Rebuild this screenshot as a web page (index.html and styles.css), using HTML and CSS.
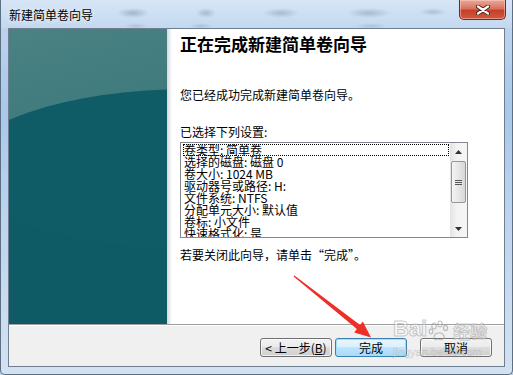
FILE: index.html
```html
<!DOCTYPE html>
<html lang="zh-CN">
<head>
    <meta charset="UTF-8">
    <title>新建简单卷向导</title>
    <link rel="stylesheet" href="styles.css">
</head>
<body>
    <div class="window">
        <div class="titlebar">
            <span class="title">新建简单卷向导</span>
            <button class="close">
                <svg width="14" height="10" viewBox="0 0 14 10">
                    <path d="M2 1.5 L12 8.5 M12 1.5 L2 8.5" stroke="#4a1d14" stroke-width="4" stroke-linecap="round"/>
                    <path d="M2 1.5 L12 8.5 M12 1.5 L2 8.5" stroke="#fff" stroke-width="2.2" stroke-linecap="round"/>
                </svg>
            </button>
        </div>

        <div class="client">
            <div class="main">
                <div class="side"></div>
                <div class="content">
                    <h1>正在完成新建简单卷向导</h1>
                    <p class="intro">您已经成功完成新建简单卷向导。</p>
                    <p class="label">已选择下列设置:</p>

                    <!-- settings summary -->
                    <div class="listbox">
                        <ul class="items">
                            <li class="focused">卷类型: 简单卷</li>
                            <li>选择的磁盘: 磁盘 0</li>
                            <li>卷大小: 1024 MB</li>
                            <li>驱动器号或路径: H:</li>
                            <li>文件系统: NTFS</li>
                            <li>分配单元大小: 默认值</li>
                            <li>卷标: 小文件</li>
                            <li>快速格式化: 是</li>
                        </ul>
                        <div class="scrollbar">
                            <div class="sb-arrow">
                                <svg width="7" height="4" viewBox="0 0 7 4"><path d="M0 4 L3.5 0 L7 4 Z" fill="#333"/></svg>
                            </div>
                            <div class="sb-track">
                                <div class="sb-thumb">
                                    <svg width="7" height="7" viewBox="0 0 7 7">
                                        <path d="M0 1.5 H7 M0 3.5 H7 M0 5.5 H7" stroke="#555" stroke-width="1"/>
                                    </svg>
                                </div>
                            </div>
                            <div class="sb-arrow">
                                <svg width="7" height="4" viewBox="0 0 7 4"><path d="M0 0 L3.5 4 L7 0 Z" fill="#333"/></svg>
                            </div>
                        </div>
                    </div>

                    <p class="hint">若要关闭此向导，请单击“完成”。</p>
                </div>
            </div>

            <div class="footer">
                <button class="btn">&lt; 上一步(<u>B</u>)</button>
                <button class="btn default">完成</button>
                <button class="btn cancel">取消</button>
            </div>
        </div>

        <!-- annotation overlay -->
        <svg class="arrow" width="513" height="375" viewBox="0 0 513 375">
            <polygon points="292.6,276.5 355.9,329.1 353.2,332.6 370,337.5 361.8,321.6 359.1,325.1 293.4,275.5" fill="#ee2f28"/>
        </svg>

        <div class="watermark">
            <div class="wm-logo">
                <span>Bai</span>
                <svg width="22" height="22" viewBox="0 0 22 22">
                    <g fill="none" stroke="rgba(150,150,150,0.55)" stroke-width="1.2">
                        <ellipse cx="6" cy="6" rx="2.2" ry="3"/>
                        <ellipse cx="12" cy="4" rx="2.2" ry="3"/>
                        <ellipse cx="17.5" cy="8" rx="2" ry="2.6"/>
                        <ellipse cx="3" cy="11.5" rx="1.8" ry="2.4"/>
                        <path d="M6 18 C6 12 14 11 16 16 C17 20 12 20 10 19 C8 20 6 20 6 18 Z"/>
                    </g>
                </svg>
                <span class="wm-cn">经验</span>
            </div>
            <div class="wm-url">jingyan.baidu.com</div>
        </div>
    </div>
</body>
</html>
```

FILE: styles.css
```css
* {
    box-sizing: border-box;
    margin: 0;
    padding: 0;
}

body {
    width: 513px;
    height: 375px;
    overflow: hidden;
    font-family: "Noto Sans CJK SC", "Noto Sans", sans-serif;
    font-size: 12px;
    color: #000;
    background: #b9cfe7;
}

.window {
    position: relative;
    width: 513px;
    height: 375px;
    padding: 0 7px 7px 7px;
    display: flex;
    flex-direction: column;
    border: 1px solid #5d6f82;
    border-top: none;
    border-radius: 0 0 5px 5px;
    background:
        linear-gradient(to bottom, #cfe0f2 0, #bcd3ec 30px, #a9c8ea 110px, #bdd4ee 220px, #d3e2f2 375px);
}

/* title bar (aero glass) */
.titlebar {
    height: 28px;
    margin: 0 -7px;
    padding: 0 7px 0 7px;
    display: flex;
    justify-content: space-between;
    align-items: flex-start;
    background:
        radial-gradient(ellipse 16px 5px at 132px 13px, rgba(80, 100, 125, 0.35), transparent),
        radial-gradient(ellipse 10px 5px at 205px 13px, rgba(80, 100, 125, 0.3), transparent),
        radial-gradient(ellipse 18px 5px at 280px 13px, rgba(80, 100, 125, 0.3), transparent),
        radial-gradient(ellipse 22px 5px at 368px 13px, rgba(80, 100, 125, 0.3), transparent),
        radial-gradient(ellipse 14px 4px at 432px 12px, rgba(80, 100, 125, 0.25), transparent),
        radial-gradient(ellipse 12px 3px at 135px 26px, rgba(80, 100, 125, 0.2), transparent),
        radial-gradient(ellipse 12px 3px at 200px 26px, rgba(80, 100, 125, 0.2), transparent),
        radial-gradient(ellipse 16px 3px at 370px 26px, rgba(80, 100, 125, 0.2), transparent),
        linear-gradient(to bottom, #d6e6f6, #c3d8ef);
}

.title {
    line-height: 14px;
    padding-top: 8px;
    padding-left: 1px;
    text-shadow: 0 0 6px rgba(255, 255, 255, 0.9);
}

.close {
    width: 47px;
    height: 20px;
    margin-right: -1px;
    border: 1px solid #6e2b20;
    border-top: none;
    border-radius: 0 0 5px 5px;
    display: flex;
    align-items: center;
    justify-content: center;
    background: linear-gradient(to bottom, #e9a99a 0, #d8735f 45%, #c5412b 55%, #cf5a3f 100%);
    box-shadow: inset 0 0 0 1px rgba(255, 210, 200, 0.5);
}

/* client area */
.client {
    flex: 1;
    display: flex;
    flex-direction: column;
    border: 1px solid #6f7f8f;
    background: #f0f0f0;
}

.main {
    height: 295px;
    display: flex;
}

.side {
    position: relative;
    overflow: hidden;
    width: 158px;
    background:
        linear-gradient(to bottom, transparent 0, transparent 140px, #0e5b66 140px),
        linear-gradient(165deg, #4b8284 0, #3a7779 45%, #2b6a72 100%);
}

.side::before {
    content: "";
    position: absolute;
    left: -48px;
    top: 60px;
    width: 460px;
    height: 160px;
    border-radius: 50%;
    background: #0f5c67;
}

.content {
    flex: 1;
    padding: 5px 0 0 13px;
    background: linear-gradient(to right, #d3d9dc 0, #fff 5px);
}

h1 {
    font-size: 17px;
    font-weight: bold;
    line-height: 20px;
}

.intro,
.label,
.hint {
    line-height: 14px;
}

.intro {
    margin-top: 34px;
}

.label {
    margin-top: 23px;
}

.hint {
    margin-top: 10px;
}

/* list box */
.listbox {
    margin-top: 3px;
    width: 288px;
    height: 96px;
    border: 1px solid #828790;
    background: #fff;
    display: flex;
}

.items {
    flex: 1;
    list-style: none;
    overflow: hidden;
    padding: 1px 1px 0 2px;
}

.items li {
    line-height: 12px;
    height: 12px;
    padding-left: 1px;
    white-space: nowrap;
}

.items li.focused {
    outline: 1px dotted #000;
    outline-offset: -1px;
}

.scrollbar {
    width: 17px;
    display: flex;
    flex-direction: column;
    background: linear-gradient(to right, #e3e3e3, #f3f3f3 40%, #f5f5f5);
}

.sb-arrow {
    height: 17px;
    display: flex;
    align-items: center;
    justify-content: center;
}

.sb-track {
    flex: 1;
    padding: 1px 0 0 0;
}

.sb-thumb {
    height: 42px;
    margin: 0 1px;
    border: 1px solid #979797;
    border-radius: 2px;
    display: flex;
    align-items: center;
    justify-content: center;
    background: linear-gradient(to right, #f4f4f4, #e6e6e6 50%, #d8d8d8);
}

/* footer buttons */
.footer {
    flex: 1;
    border-top: 1px solid #a0a0a0;
    box-shadow: inset 0 1px #fff;
    display: flex;
    justify-content: flex-end;
    align-items: flex-start;
    padding: 13px 12px 0 0;
}

.btn {
    width: 72px;
    height: 19px;
    font-family: "Noto Sans CJK SC", sans-serif;
    font-size: 12px;
    line-height: 17px;
    color: #000;
    border: 1px solid #707070;
    border-radius: 3px;
    background: linear-gradient(to bottom, #f2f2f2 0, #ebebeb 50%, #dddddd 50%, #cfcfcf 100%);
    box-shadow: inset 0 0 0 1px rgba(255, 255, 255, 0.7);
}

.btn u {
    text-decoration: underline;
}

.btn.default {
    margin-left: 3px;
    border-color: #3c7fb1;
    background: linear-gradient(to bottom, #eaf6fd 0, #d9f0fc 50%, #bee6fd 50%, #a7d9f5 100%);
    box-shadow: inset 0 0 0 1px #9fe0fb;
}

.btn.cancel {
    margin-left: 13px;
}

/* red annotation arrow */
.arrow {
    position: absolute;
    top: 0;
    left: 0;
    pointer-events: none;
}

/* site watermark */
.watermark {
    position: absolute;
    left: 392px;
    top: 316px;
    pointer-events: none;
    color: rgba(255, 255, 255, 0.45);
    font-family: "Liberation Sans", sans-serif;
}

.wm-logo {
    display: flex;
    align-items: flex-end;
    gap: 1px;
    font-size: 22px;
    font-weight: bold;
    line-height: 26px;
    -webkit-text-stroke: 1px rgba(140, 140, 140, 0.45);
}

.wm-cn {
    font-family: "Noto Sans CJK SC", sans-serif;
    font-size: 17px;
    line-height: 22px;
    margin-left: 2px;
}

.wm-url {
    font-size: 11px;
    line-height: 12px;
    margin-top: 4px;
    -webkit-text-stroke: 0.5px rgba(140, 140, 140, 0.4);
}
```
